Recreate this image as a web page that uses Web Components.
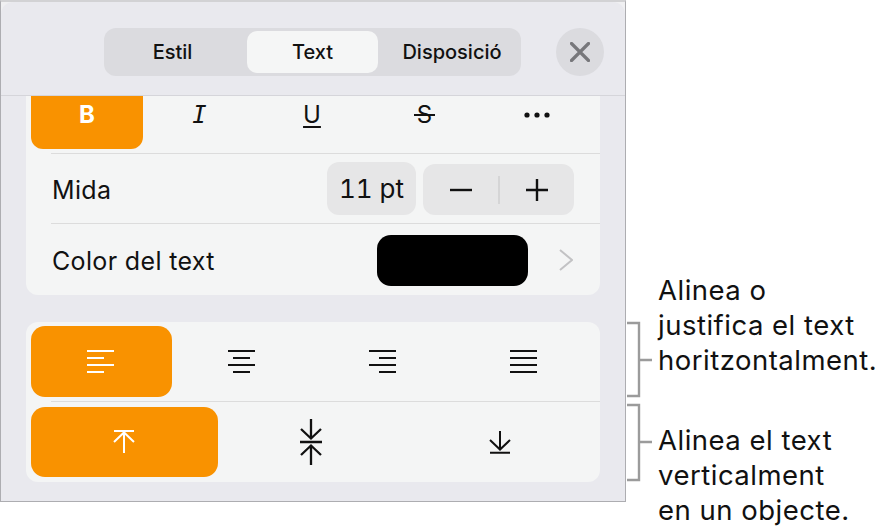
<!DOCTYPE html>
<html lang="ca"><head><meta charset="utf-8"><title>Text</title>
<style>
html,body{margin:0;padding:0;background:#fff}
body{width:886px;height:531px;overflow:hidden;font-family:Inter,"Liberation Sans",sans-serif;color:#111}
</style></head><body>
<x-page>
  <x-sheet>
    <x-tabs slot="head"></x-tabs>
    <x-card>
      <x-style-row></x-style-row>
      <x-row label="Mida"><x-size></x-size></x-row>
      <x-row label="Color del text"><x-color></x-color></x-row>
    </x-card>
    <x-card second>
      <x-align-row></x-align-row>
      <x-valign-row></x-valign-row>
    </x-card>
  </x-sheet>
  <x-notes></x-notes>
</x-page>
<script>
const def=(name,html,init)=>customElements.define(name,class extends HTMLElement{
  constructor(){super();this.attachShadow({mode:'open'}).innerHTML=html;if(init)init(this)}
});
const ico=(w,h,inner,cls='')=>`<svg class="${cls}" width="${w}" height="${h}" viewBox="0 0 ${w} ${h}" fill="none" stroke="currentColor" stroke-width="2">${inner}</svg>`;

def('x-page',`<style>:host{display:flex;align-items:flex-start;width:886px;height:531px}</style><slot></slot>`);

def('x-sheet',`<style>
:host{display:block;box-sizing:border-box;width:626px;height:502px;background:#f0f0f2;border:1px solid #adadb1;border-top:2px solid #d2d2d4;flex:none}
header{height:94px;box-sizing:border-box;background:#e9e9ee;border-radius:12px 12px 0 0;border-bottom:1px solid #d5d5da;display:flex;align-items:flex-start;padding:26px 0 0 103px}
.close{width:48px;height:48px;border-radius:50%;background:#dbdbdf;margin-left:35px;display:flex;align-items:center;justify-content:center;color:#77777b}
main{padding:0 25px 19px;background:#e9e9ee;display:flex;flex-direction:column;gap:27px}
</style><header><slot name="head"></slot><div class="close">${ico(20,20,'<path d="M1.500 1.500 18.500 18.500M18.500 1.500 1.500 18.500" stroke-width="3.2" stroke-linecap="round"/>')}</div></header><main><slot></slot></main>`);

def('x-tabs',`<style>
:host{display:grid;grid-template-columns:143px 131px 143px;align-items:center;width:417px;height:48px;box-sizing:border-box;background:#dbdbdf;border-radius:12px;font-size:20px;font-weight:500}
div{text-align:center;line-height:42px;height:42px;box-sizing:border-box}
.a{padding-right:6px}
.c{padding-left:5px}
.on{background:#f5f6f6;border-radius:10px}
</style><div class="a">Estil</div><div class="on">Text</div><div class="c">Disposició</div>`);

def('x-card',`<style>
:host{display:flex;flex-direction:column;background:#f4f5f5;border-radius:12px;height:199px}
:host([second]){height:160px}
:host(:not([second])){border-radius:0 0 12px 12px}
</style><slot></slot>`);

def('x-style-row',`<style>
:host{display:grid;grid-template-columns:repeat(5,112.4px);padding:0 5px;height:58px;box-sizing:border-box;position:relative}
:host::after{content:"";position:absolute;left:25px;right:0;bottom:0;height:1px;background:#dcdcdc}
div{height:53px;display:flex;align-items:center;justify-content:center;font-size:24px;padding-bottom:16px;box-sizing:border-box;color:#111}
.b{background:#f99200;color:#fff;font-weight:700;border-radius:0 0 12px 12px;width:112px}
.i{font-family:"DejaVu Sans Mono",monospace;font-style:italic;font-size:24px}
.u span{text-decoration:underline;text-underline-offset:3px;text-decoration-thickness:2px}
.s span{position:relative}
.s span::after{content:"";position:absolute;left:-3px;right:-3px;top:50%;height:2px;margin-top:-1px;background:#111}
svg{stroke:none;fill:currentColor}
</style><div class="b">B</div><div class="i">I</div><div class="u"><span>U</span></div><div class="s"><span>S</span></div><div><svg width="26" height="6" viewBox="0 0 26 6"><circle cx="3" cy="3" r="2.600"/><circle cx="13" cy="3" r="2.600"/><circle cx="23" cy="3" r="2.600"/></svg></div>`);

def('x-row',`<style>
:host{display:flex;align-items:center;justify-content:space-between;height:71px;box-sizing:border-box;padding:2px 26px 0;font-size:25px;letter-spacing:.35px;position:relative}
:host(:not(:last-child))::after{content:"";position:absolute;left:25px;right:0;bottom:0;height:1px;background:#dcdcdc}
</style><span id="l"></span><slot></slot>`,el=>{queueMicrotask(()=>{el.shadowRoot.getElementById('l').textContent=el.getAttribute('label')})});

def('x-size',`<style>
:host{display:flex;align-items:flex-start;gap:7px;margin-bottom:3px}
.v{width:89px;height:53px;border-radius:12px;background:#e6e6e7;display:flex;align-items:center;justify-content:center;font-size:26px;letter-spacing:0;font-variant-numeric:tabular-nums}
.s{width:151px;height:51px;margin-top:2px;border-radius:12px;background:#e6e6e7;display:grid;grid-template-columns:75px 1px 75px;align-items:center;justify-items:center}
i{display:block;width:2px;height:28px;background:#d5d5d6}
svg{color:#111}
</style><div class="v">11 pt</div><div class="s">${ico(24,24,'<path d="M1 12H23" stroke-width="2.400"/>')}<i></i>${ico(24,24,'<path d="M1 12H23M12 1V23" stroke-width="2.400"/>')}</div>`);

def('x-color',`<style>
:host{display:flex;align-items:center;gap:31px;margin-right:1px;margin-bottom:1px}
.c{width:151px;height:51px;border-radius:14px;background:#000}
svg{color:#c2c2c4;margin-bottom:1px}
</style><div class="c"></div>${ico(14,22,'<path d="M1 1 13 11 1 21" stroke-width="2"/>')}`);

const lines=(spec)=>spec.map((s,i)=>`<path d="M${s[0]} ${1+i*7}H${s[1]}" />`).join('');
def('x-align-row',`<style>
:host{display:grid;grid-template-columns:repeat(4,141px);padding:4px 5px 0;height:80px;box-sizing:border-box;position:relative}
:host::after{content:"";position:absolute;left:25px;right:0;bottom:0;height:1px;background:#dcdcdc}
div{height:71px;display:flex;align-items:center;justify-content:center;color:#111}
.on{background:#f99200;color:#fff;border-radius:14px}
svg{margin-left:-2px}
</style>
<div class="on">${ico(27,24,lines([[0,27],[0,17],[0,27],[0,17]]))}</div>
<div>${ico(27,24,lines([[0,27],[5,22],[0,27],[5,22]]))}</div>
<div>${ico(27,24,lines([[0,27],[10,27],[0,27],[10,27]]))}</div>
<div>${ico(27,24,lines([[0,27],[0,27],[0,27],[0,27]]))}</div>`);

def('x-valign-row',`<style>
:host{display:grid;grid-template-columns:187px 188px 188px;padding:5px 5px 0;box-sizing:border-box;height:80px}
div{height:70px;display:flex;align-items:center;justify-content:center;color:#111}
.on{background:#f99200;color:#fff;border-radius:14px}
.on svg{margin-right:2px}
.m svg{margin-right:2px}
</style>
<div class="on">${ico(22,24,'<path d="M1 1H21M11 2V23M1 12 11 2.500 21 12"/>')}</div>
<div class="m">${ico(24,48,'<path d="M1 24H23M12 1V20.500M2 11 12 20.500 22 11M12 27.500V47M2 37 12 27.500 22 37" stroke-width="2.300"/>')}</div>
<div>${ico(22,24,'<path d="M1 22.700H21M11 1V20M1 10 11 19.500 21 10"/>')}</div>`);

def('x-notes',`<style>
:host{display:flex;flex-direction:column;flex:none;width:260px;padding-top:273px;font-size:27.5px;line-height:35px;color:#111;letter-spacing:.5px}
.n{display:flex;align-items:flex-start;gap:6px;padding-left:1px}
.n1{height:127px}
.n1 svg{margin-top:48px}
.n2 svg{margin-top:3px}
.n2 p{margin-top:23px}
p{margin:0;white-space:nowrap}
svg{color:#9b9b9b;flex:none}
</style>
<div class="n n1"><svg width="25" height="77" viewBox="0 0 25 77" fill="none" stroke="currentColor" stroke-width="2.400"><path d="M0 2H12V75H0M12 39H25"/></svg><p>Alinea o<br>justifica el text<br>horitzontalment.</p></div>
<div class="n n2"><svg width="25" height="79" viewBox="0 0 25 79" fill="none" stroke="currentColor" stroke-width="2.400"><path d="M0 2H12V77H0M12 39H25"/></svg><p>Alinea el text<br>verticalment<br>en un objecte.</p></div>`);
</script>
</body></html>
